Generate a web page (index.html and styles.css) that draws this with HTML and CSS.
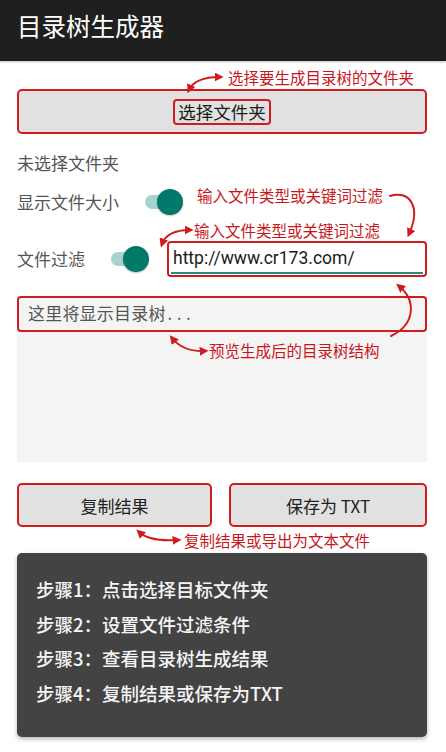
FILE: index.html
```html
<!DOCTYPE html>
<html lang="zh-CN">
<head>
<meta charset="utf-8">
<title>目录树生成器</title>
<link rel="stylesheet" href="styles.css">
</head>
<body>
<div class="app">
  <header class="topbar"><h1 class="title">目录树生成器</h1></header>
  <main class="content">
    <button class="btn btn-wide"><span class="btn-label-box">选择文件夹</span></button>
    <div class="status">未选择文件夹</div>
    <div class="row row-size">
      <span class="label">显示文件大小</span>
      <span class="switch"><span class="thumb"></span></span>
    </div>
    <div class="row row-filter">
      <span class="label">文件过滤</span>
      <span class="switch"><span class="thumb"></span></span>
      <div class="input-box"><span class="input-text">http://www.cr173.com/</span></div>
    </div>
    <section class="tree">
      <div class="tree-first">这里将显示目录树<span class="dots">...</span></div>
    </section>
    <div class="btn-row">
      <button class="btn">复制结果</button>
      <button class="btn">保存为 TXT</button>
    </div>
    <section class="steps">
      <p class="step">步骤1：点击选择目标文件夹</p>
      <p class="step">步骤2：设置文件过滤条件</p>
      <p class="step">步骤3：查看目录树生成结果</p>
      <p class="step">步骤4：复制结果或保存为TXT</p>
    </section>
  </main>

  <div class="callouts">
    <span class="note note-1">选择要生成目录树的文件夹</span>
    <span class="note note-2">输入文件类型或关键词过滤</span>
    <span class="note note-3">输入文件类型或关键词过滤</span>
    <span class="note note-4">预览生成后的目录树结构</span>
    <span class="note note-5">复制结果或导出为文本文件</span>
    <svg class="arrows" width="446" height="752" viewBox="0 0 446 752">
      <defs>
        <marker id="ah" viewBox="0 0 10 10" refX="6" refY="5" markerWidth="4.5" markerHeight="4.5" orient="auto-start-reverse">
          <path d="M0,0 L10,5 L0,10 z" fill="#d01c1f"/>
        </marker>
      </defs>
      <g fill="none" stroke="#d01c1f" stroke-width="2" stroke-linecap="round">
        <path d="M189,90 Q195,77 220,77" marker-start="url(#ah)" marker-end="url(#ah)"/>
        <path d="M390,196 C408,190 422,205 409,234" marker-end="url(#ah)"/>
        <path d="M162,244 Q167,230 190,230" marker-start="url(#ah)" marker-end="url(#ah)"/>
        <path d="M399,286 C416,300 416,324 391,336" marker-start="url(#ah)"/>
        <path d="M172,338 Q183,352 205,351" marker-start="url(#ah)" marker-end="url(#ah)"/>
        <path d="M139,532 Q150,542 178,540" marker-start="url(#ah)" marker-end="url(#ah)"/>
      </g>
    </svg>
  </div>
</div>
</body>
</html>
```
FILE: styles.css
```css
* { box-sizing: border-box; }
html, body { margin: 0; padding: 0; background: #ffffff; }
body {
  font-family: "Noto Sans CJK SC", "Noto Sans", Roboto, sans-serif;
  color: #444;
}
.app { position: relative; width: 446px; height: 752px; overflow: hidden; }

.topbar {
  height: 61px;
  background: #1f1f1f;
  padding: 9px 0 0 17px;
  box-shadow: 0 1px 2px rgba(0,0,0,0.25);
}
.title {
  margin: 0;
  font-size: 24.5px;
  line-height: 34px;
  font-weight: 400;
  color: #ffffff;
}

.content {
  display: flex;
  flex-direction: column;
  padding: 0 19px 0 17px;
}

.btn {
  font-family: inherit;
  font-size: 17px;
  color: #222;
  background: #e1e1e1;
  border: 2px solid #d01c1f;
  border-radius: 5px;
  display: flex;
  align-items: center;
  justify-content: center;
  padding: 0;
}
.btn-wide { margin-top: 28px; height: 45px; }
.btn-label-box {
  border: 2px solid #d01c1f;
  border-radius: 4px;
  padding: 0 3px;
  line-height: 22px;
  font-size: 17.5px;
  color: #1a1a1a;
}

.status {
  margin-top: 17px;
  font-size: 17px;
  line-height: 24px;
  color: #555;
}

.row { display: flex; align-items: center; }
.row-size { margin-top: 7px; height: 40px; }
.row-filter { margin-top: 19px; height: 36px; }
.label { font-size: 17px; color: #555; line-height: 24px; }

.switch {
  position: relative;
  width: 38px;
  height: 26px;
  margin-left: 26px;
  flex: none;
}
.switch::before {
  content: "";
  position: absolute;
  left: 0; right: 4px; top: 6px; height: 14px;
  border-radius: 7px;
  background: #a6d4cd;
}
.thumb {
  position: absolute;
  right: 0; top: 0;
  width: 26px; height: 26px;
  border-radius: 50%;
  background: #00796b;
  box-shadow: 0 1px 2px rgba(0,0,0,0.25);
}

.input-box {
  flex: 1;
  margin-left: 18px;
  height: 36px;
  border: 2px solid #d01c1f;
  border-radius: 4px;
  display: flex;
  align-items: center;
  padding: 0 2px 0 4px;
  position: relative;
}
.input-box::after {
  content: "";
  position: absolute;
  left: 2px; right: 2px; bottom: 1px;
  height: 2px;
  background: #1f8f80;
}
.input-text {
  font-family: Roboto, "Noto Sans", sans-serif;
  font-size: 17.5px;
  color: #1a1a1a;
  line-height: 22px;
  margin-top: -2px;
}

.tree {
  margin-top: 19px;
  height: 166px;
  background: #f4f4f4;
}
.tree-first {
  height: 36px;
  border: 2px solid #d01c1f;
  border-radius: 4px;
  padding-left: 9px;
  font-size: 17px;
  line-height: 30px;
  color: #555;
  letter-spacing: 0.2px;
}
.dots { letter-spacing: 4.5px; margin-left: 2px; }

.btn-row {
  margin-top: 21px;
  display: grid;
  grid-template-columns: 195px 1fr;
  gap: 17px;
}
.btn-row .btn { height: 44px; }

.steps {
  margin-top: 26px;
  height: 184px;
  background: #434343;
  border-radius: 5px;
  padding: 19px 19px 0 19px;
  box-shadow: 0 2px 4px rgba(0,0,0,0.3);
}
.step {
  margin: 0;
  font-size: 18.5px;
  line-height: 34.7px;
  color: #f5f5f5;
  font-weight: 500;
}

.callouts { position: absolute; inset: 0; pointer-events: none; }
.arrows { position: absolute; left: 0; top: 0; }
.note {
  position: absolute;
  font-size: 15.5px;
  line-height: 20px;
  color: #c8161d;
  white-space: nowrap;
}
.note-1 { left: 228px; top: 67px; }
.note-2 { left: 197px; top: 185px; }
.note-3 { left: 194px; top: 220px; }
.note-4 { left: 209px; top: 340px; }
.note-5 { left: 184px; top: 530px; }
```
